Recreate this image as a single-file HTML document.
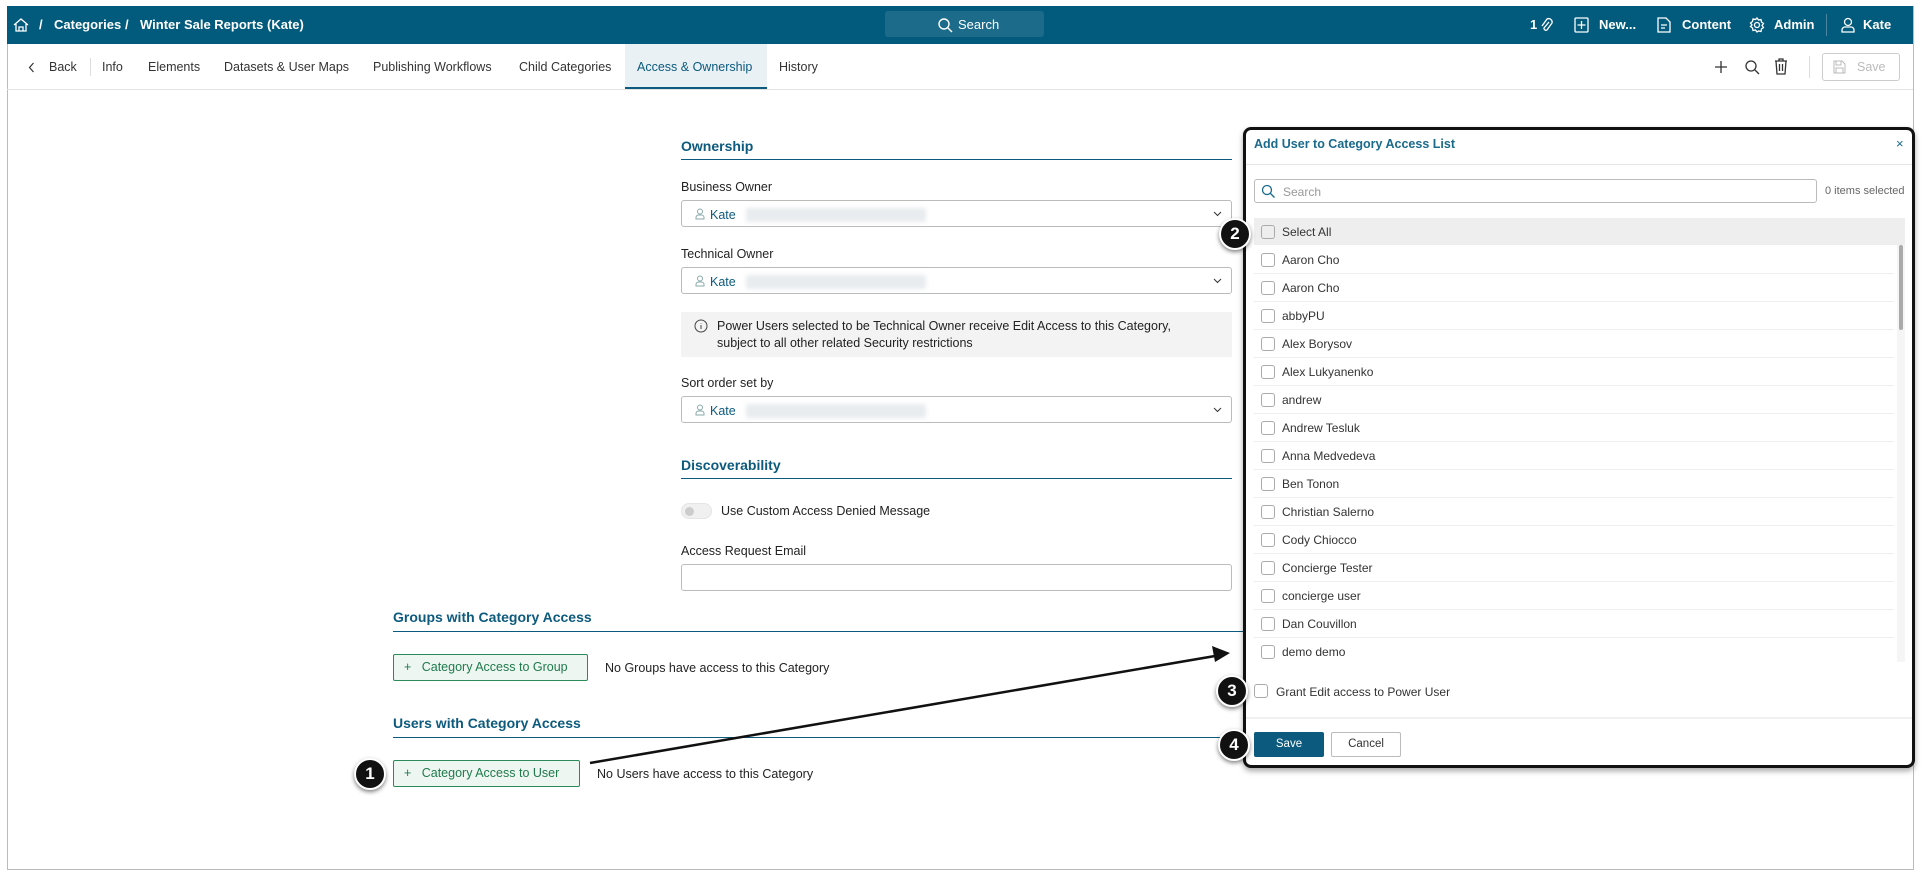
<!DOCTYPE html>
<html><head><meta charset="utf-8"><style>
*{box-sizing:border-box;margin:0;padding:0}
body{width:1923px;height:872px;background:#fff;font-family:"Liberation Sans",sans-serif;font-size:12.5px;color:#222;position:relative;overflow:hidden}
.a{position:absolute}
.frame{left:7px;top:6px;width:1907px;height:864px;border:1px solid #bbb;border-top:none}
.hdr{left:7px;top:6px;width:1906px;height:38px;background:#025a7c;color:#fff;font-weight:bold;font-size:13px}
.hdr span{position:absolute;top:11px}
.tab{top:60px;font-size:12.5px;color:#333}
.lbl{font-size:12.5px;color:#222}
.h{font-weight:bold;color:#0c5a7d;font-size:14px}
.line{height:1px;background:#0c5a7d}
.sel{border:1px solid #bbb;border-radius:3px;background:#fff}
.sel .k{position:absolute;left:28px;top:7px;color:#0c5a7d}
.sel .b{position:absolute;left:64px;top:7px;width:180px;height:14px;background:#e8ecef;filter:blur(2px)}
.sel .u{position:absolute;left:13px;top:7px}
.sel .c{position:absolute;right:9px;top:10px}
.btn{border:1px solid #2a8a5a;background:#eef6f1;color:#1f7a4c;border-radius:2px;font-size:12.5px;padding-left:10px;line-height:25px}
.circ{width:32px;height:32px;border-radius:50%;background:#111;border:2px solid #fff;box-shadow:0 2px 4px rgba(0,0,0,.5);color:#fff;font-weight:bold;font-size:17px;text-align:center;line-height:28px}
.row{left:1254px;width:640px;height:28px;border-bottom:1px solid #eee;font-size:12px;color:#333}
.row i{position:absolute;left:7px;top:7px;width:14px;height:14px;border:1px solid #aaa;border-radius:3px}
.row span{position:absolute;left:28px;top:7px}
</style></head><body>
<div class="a frame"></div>
<div class="a hdr">
<svg class="a" style="left:6px;top:11px" width="16" height="16" viewBox="0 0 16 16" fill="none" stroke="#fff" stroke-width="1.3"><path d="M1 8L8 2l7 6M3 7v7h10V7M6 14v-4h4v4"/></svg>
<span style="left:32px">/</span><span style="left:47px">Categories</span><span style="left:118px">/</span><span style="left:133px">Winter Sale Reports (Kate)</span>
<div class="a" style="left:878px;top:5px;width:159px;height:26px;background:#1c6b8b;border-radius:3px"></div>
<svg class="a" style="left:930px;top:11px" width="16" height="16" viewBox="0 0 16 16" fill="none" stroke="#fff" stroke-width="1.4"><circle cx="7" cy="7" r="5"/><path d="M11 11l4 4"/></svg>
<span style="left:951px;font-weight:normal">Search</span>
<span style="left:1523px">1</span>
<svg class="a" style="left:1532px;top:11px" width="14" height="16" viewBox="0 0 14 16" fill="none" stroke="#fff" stroke-width="1.3"><path d="M10 5L5 11a2 2 0 0 0 3 2l5-7a3.5 3.5 0 0 0-5-4L3 9"/></svg>
<svg class="a" style="left:1567px;top:11px" width="15" height="16" viewBox="0 0 15 16" fill="none" stroke="#fff" stroke-width="1.3"><rect x="1" y="1" width="13" height="14" rx="1"/><path d="M7.5 4v8M3.5 8h8"/></svg>
<span style="left:1592px">New...</span>
<svg class="a" style="left:1650px;top:11px" width="14" height="16" viewBox="0 0 14 16" fill="none" stroke="#fff" stroke-width="1.3"><path d="M1 1h8l4 4v10H1zM4 8h6M4 11h4"/></svg>
<span style="left:1675px">Content</span>
<svg class="a" style="left:1742px;top:11px" width="16" height="16" viewBox="0 0 16 16" fill="none" stroke="#fff" stroke-width="1.3"><circle cx="8" cy="8" r="2.5"/><path d="M8 1l1.5 2 2.5-.5.5 2.5 2 1.5-1.5 2 1.5 2-2 1.5-.5 2.5-2.5-.5L8 15l-1.5-2-2.5.5-.5-2.5-2-1.5L3 8 1.5 6l2-1.5.5-2.5 2.5.5z"/></svg>
<span style="left:1767px">Admin</span>
<div class="a" style="left:1819px;top:8px;width:1px;height:22px;background:#4a87a3"></div>
<svg class="a" style="left:1834px;top:11px" width="14" height="16" viewBox="0 0 14 16" fill="none" stroke="#fff" stroke-width="1.3"><circle cx="7" cy="5" r="3.5"/><path d="M1 15v-2a3 3 0 0 1 3-3h6a3 3 0 0 1 3 3v2z"/></svg>
<span style="left:1856px">Kate</span>
</div>
<div class="a" style="left:625px;top:44px;width:142px;height:45px;background:#eaf1f5;border-bottom:2px solid #0c5a7d"></div>
<div class="a" style="left:7px;top:89px;width:1906px;height:1px;background:#e3e3e3"></div>
<svg class="a" style="left:28px;top:62px" width="7" height="11" viewBox="0 0 7 11" fill="none" stroke="#333" stroke-width="1.2"><path d="M5.5 1L1.5 5.5l4 4.5"/></svg>
<span class="a tab" style="left:49px">Back</span>
<div class="a" style="left:90px;top:58px;width:1px;height:18px;background:#ddd"></div>
<span class="a tab" style="left:102px">Info</span>
<span class="a tab" style="left:148px">Elements</span>
<span class="a tab" style="left:224px">Datasets &amp; User Maps</span>
<span class="a tab" style="left:373px">Publishing Workflows</span>
<span class="a tab" style="left:519px">Child Categories</span>
<span class="a tab" style="left:637px;color:#0c5a7d">Access &amp; Ownership</span>
<span class="a tab" style="left:779px">History</span>
<svg class="a" style="left:1714px;top:60px" width="14" height="14" viewBox="0 0 14 14" stroke="#333" stroke-width="1.3"><path d="M7 1v12M1 7h12"/></svg>
<svg class="a" style="left:1744px;top:59px" width="16" height="16" viewBox="0 0 16 16" fill="none" stroke="#333" stroke-width="1.3"><circle cx="7" cy="7" r="5"/><path d="M11 11l4 4"/></svg>
<svg class="a" style="left:1774px;top:58px" width="14" height="17" viewBox="0 0 14 17" fill="none" stroke="#333" stroke-width="1.3"><path d="M1 3h12M5 3V1h4v2M2 3l1 13h8l1-13M5.5 6v7M8.5 6v7"/></svg>
<div class="a" style="left:1809px;top:56px;width:1px;height:22px;background:#ddd"></div>
<div class="a" style="left:1822px;top:53px;width:78px;height:28px;border:1px solid #ccc;border-radius:3px;color:#bbb;font-size:12.5px"><svg class="a" style="left:10px;top:6px" width="13" height="14" viewBox="0 0 13 14" fill="none" stroke="#bbb"><path d="M1 1h8l3 3v9H1zM3 1v4h5V1M3 13V8h7v5"/></svg><span class="a" style="left:34px;top:6px">Save</span></div>
<span class="a h" style="left:681px;top:138px">Ownership</span>
<div class="a line" style="left:681px;top:159px;width:551px"></div>
<span class="a lbl" style="left:681px;top:180px">Business Owner</span>
<div class="a sel" style="left:681px;top:200px;width:551px;height:27px"><svg class="u" width="10" height="12" viewBox="0 0 10 12" fill="none" stroke="#8aa" stroke-width="1"><circle cx="5" cy="3.5" r="2.5"/><path d="M1 11V9.5A2.5 2.5 0 0 1 3.5 7h3A2.5 2.5 0 0 1 9 9.5V11z"/></svg><span class="k">Kate</span><i class="b"></i><svg class="c" width="9" height="6" viewBox="0 0 9 6" fill="none" stroke="#333"><path d="M1 1l3.5 3.5L8 1"/></svg></div>
<span class="a lbl" style="left:681px;top:247px">Technical Owner</span>
<div class="a sel" style="left:681px;top:267px;width:551px;height:27px"><svg class="u" width="10" height="12" viewBox="0 0 10 12" fill="none" stroke="#8aa" stroke-width="1"><circle cx="5" cy="3.5" r="2.5"/><path d="M1 11V9.5A2.5 2.5 0 0 1 3.5 7h3A2.5 2.5 0 0 1 9 9.5V11z"/></svg><span class="k">Kate</span><i class="b"></i><svg class="c" width="9" height="6" viewBox="0 0 9 6" fill="none" stroke="#333"><path d="M1 1l3.5 3.5L8 1"/></svg></div>
<div class="a" style="left:681px;top:312px;width:551px;height:45px;background:#f3f3f3"></div>
<svg class="a" style="left:694px;top:319px" width="14" height="14" viewBox="0 0 14 14" fill="none" stroke="#444"><circle cx="7" cy="7" r="6"/><path d="M7 6v4M7 4v.5"/></svg>
<span class="a lbl" style="left:717px;top:318px;line-height:17px">Power Users selected to be Technical Owner receive Edit Access to this Category,<br>subject to all other related Security restrictions</span>
<span class="a lbl" style="left:681px;top:376px">Sort order set by</span>
<div class="a sel" style="left:681px;top:396px;width:551px;height:27px"><svg class="u" width="10" height="12" viewBox="0 0 10 12" fill="none" stroke="#8aa" stroke-width="1"><circle cx="5" cy="3.5" r="2.5"/><path d="M1 11V9.5A2.5 2.5 0 0 1 3.5 7h3A2.5 2.5 0 0 1 9 9.5V11z"/></svg><span class="k">Kate</span><i class="b"></i><svg class="c" width="9" height="6" viewBox="0 0 9 6" fill="none" stroke="#333"><path d="M1 1l3.5 3.5L8 1"/></svg></div>
<span class="a h" style="left:681px;top:457px">Discoverability</span>
<div class="a line" style="left:681px;top:478px;width:551px"></div>
<div class="a" style="left:681px;top:503px;width:31px;height:16px;border-radius:8px;background:#f0f0f0;border:1px solid #e4e4e4"><i class="a" style="left:3px;top:3px;width:9px;height:9px;border-radius:50%;background:#ccc"></i></div>
<span class="a lbl" style="left:721px;top:504px">Use Custom Access Denied Message</span>
<span class="a lbl" style="left:681px;top:544px">Access Request Email</span>
<div class="a sel" style="left:681px;top:564px;width:551px;height:27px"></div>
<span class="a h" style="left:393px;top:609px">Groups with Category Access</span>
<div class="a line" style="left:393px;top:631px;width:850px"></div>
<div class="a btn" style="left:393px;top:654px;width:195px;height:27px">+&nbsp;&nbsp; Category Access to Group</div>
<span class="a lbl" style="left:605px;top:661px">No Groups have access to this Category</span>
<span class="a h" style="left:393px;top:715px">Users with Category Access</span>
<div class="a line" style="left:393px;top:737px;width:850px"></div>
<div class="a btn" style="left:393px;top:760px;width:187px;height:27px">+&nbsp;&nbsp; Category Access to User</div>
<span class="a lbl" style="left:597px;top:767px">No Users have access to this Category</span>
<svg class="a" style="left:0;top:0" width="1923" height="872"><path d="M590 763L1215 656" stroke="#111" stroke-width="2.5"/><path d="M1230 653l-18-7 3 16z" fill="#111"/></svg>
<div class="a" style="left:1243px;top:127px;width:672px;height:641px;border:3px solid #111;border-radius:8px;background:#fff;box-shadow:0 3px 6px rgba(0,0,0,.35)"></div>
<span class="a" style="left:1254px;top:137px;font-weight:bold;color:#1a6a8c;font-size:12.5px">Add User to Category Access List</span>
<span class="a" style="left:1896px;top:136px;color:#1a6a8c;font-size:13px">&times;</span>
<div class="a" style="left:1246px;top:164px;width:666px;height:1px;background:#e6e6e6"></div>
<div class="a" style="left:1254px;top:179px;width:563px;height:24px;border:1px solid #bbb;border-radius:3px"></div>
<svg class="a" style="left:1261px;top:184px" width="14" height="14" viewBox="0 0 14 14" fill="none" stroke="#1a6a8c" stroke-width="1.3"><circle cx="6" cy="6" r="4.5"/><path d="M9.5 9.5l4 4"/></svg>
<span class="a" style="left:1283px;top:185px;font-size:12px;color:#999">Search</span>
<span class="a" style="left:1825px;top:185px;font-size:11px;color:#666">0 items selected</span>
<div class="a row" style="top:218px;height:27px;background:#eee;border:none;width:651px"><i></i><span>Select All</span></div>
<div class="a row" style="top:246px"><i></i><span>Aaron Cho</span></div>
<div class="a row" style="top:274px"><i></i><span>Aaron Cho</span></div>
<div class="a row" style="top:302px"><i></i><span>abbyPU</span></div>
<div class="a row" style="top:330px"><i></i><span>Alex Borysov</span></div>
<div class="a row" style="top:358px"><i></i><span>Alex Lukyanenko</span></div>
<div class="a row" style="top:386px"><i></i><span>andrew</span></div>
<div class="a row" style="top:414px"><i></i><span>Andrew Tesluk</span></div>
<div class="a row" style="top:442px"><i></i><span>Anna Medvedeva</span></div>
<div class="a row" style="top:470px"><i></i><span>Ben Tonon</span></div>
<div class="a row" style="top:498px"><i></i><span>Christian Salerno</span></div>
<div class="a row" style="top:526px"><i></i><span>Cody Chiocco</span></div>
<div class="a row" style="top:554px"><i></i><span>Concierge Tester</span></div>
<div class="a row" style="top:582px"><i></i><span>concierge user</span></div>
<div class="a row" style="top:610px"><i></i><span>Dan Couvillon</span></div>
<div class="a row" style="top:638px;border:none"><i></i><span>demo demo</span></div>
<div class="a" style="left:1897px;top:245px;width:8px;height:417px;background:#f5f5f5"></div>
<div class="a" style="left:1899px;top:245px;width:4px;height:85px;background:#aaa;border-radius:2px"></div>
<i class="a" style="left:1254px;top:684px;width:14px;height:14px;border:1px solid #aaa;border-radius:3px"></i>
<span class="a" style="left:1276px;top:685px;font-size:12px;color:#333">Grant Edit access to Power User</span>
<div class="a" style="left:1246px;top:717px;width:666px;height:2px;background:#f0f0f0"></div>
<div class="a" style="left:1254px;top:732px;width:70px;height:25px;background:#0c5a7d;border-radius:2px;color:#fff;font-size:11.5px;text-align:center;line-height:25px">Save</div>
<div class="a" style="left:1331px;top:732px;width:70px;height:25px;border:1px solid #bbb;border-radius:2px;color:#333;font-size:11.5px;text-align:center;line-height:23px">Cancel</div>
<div class="a circ" style="left:354px;top:758px">1</div>
<div class="a circ" style="left:1219px;top:218px">2</div>
<div class="a circ" style="left:1216px;top:675px">3</div>
<div class="a circ" style="left:1218px;top:729px">4</div>
</body></html>
